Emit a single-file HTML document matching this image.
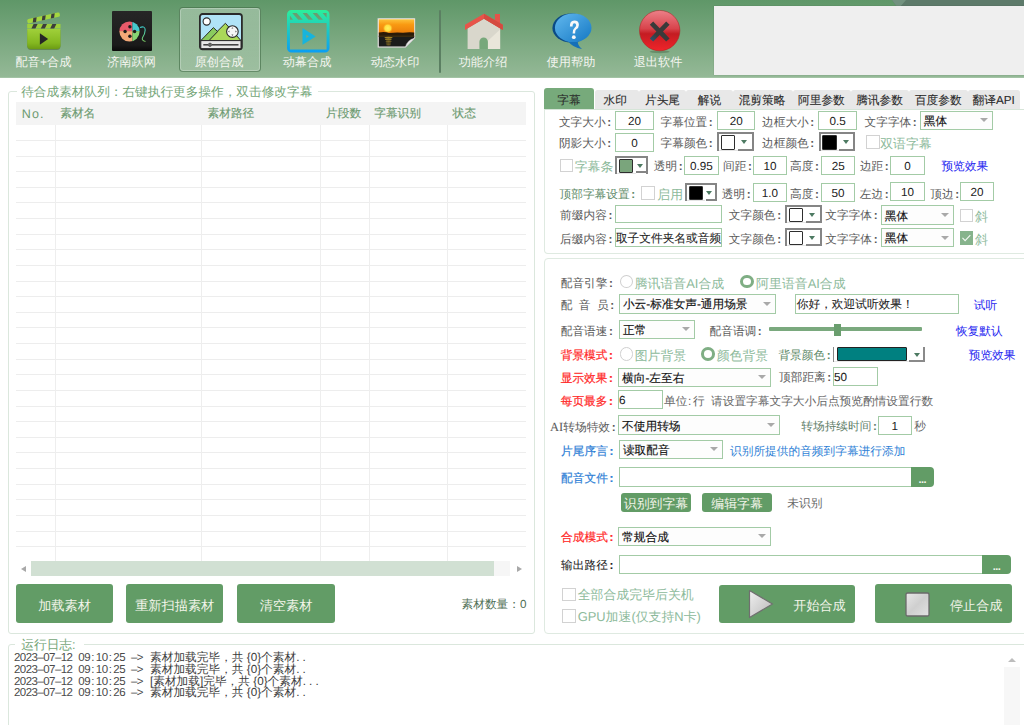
<!DOCTYPE html><html><head><meta charset="utf-8"><style>
html,body{margin:0;padding:0;}
body{width:1024px;height:725px;overflow:hidden;position:relative;background:#fff;font-family:'Liberation Sans',sans-serif;text-rendering:geometricPrecision;}
.a{position:absolute;}
.t{position:absolute;white-space:nowrap;line-height:20px;height:20px;}
.c{font-weight:bold;margin-left:1.6px;}
.lg{white-space:nowrap;line-height:16px;font-size:11.5px;color:#4a4a4a;}
.lg i{font-style:normal;display:inline-block;width:5.85px;text-align:center;}
</style></head><body>
<div class="a" style="left:0.0px;top:0.0px;width:1024.0px;height:78.0px;background:linear-gradient(#5f9768,#95b997)"></div>
<div class="a" style="left:0.0px;top:76.8px;width:1024.0px;height:1.2px;background:#a3c3a5"></div>
<svg class="a" style="left:880px;top:0" width="144" height="7"><polygon points="12,0 144,0 144,7 17,7" fill="#5d7a6a"/><polygon points="12,0 26,0 20,7 17,7" fill="#72927f"/></svg>
<div class="a" style="left:714.0px;top:6.0px;width:310.0px;height:68.5px;background:#efefef;box-shadow:0 0 1px rgba(0,0,0,0.25)"></div>
<div class="a" style="left:179.0px;top:6.6px;width:82.0px;height:65.4px;background:linear-gradient(rgba(255,255,255,0.32),rgba(255,255,255,0.12));border:1px solid rgba(60,105,65,0.65);border-radius:4px;box-sizing:border-box;box-shadow:inset 0 0 0 1px rgba(255,255,255,0.25)"></div>
<div class="a" style="left:439.0px;top:10.3px;width:1.6px;height:63.2px;background:#5b7f62;border-radius:1px"></div>
<div class="t" style="left:-0.5px;width:88px;text-align:center;top:51.9px;font-size:12.2px;color:#f4f5f0;">配音+合成</div>
<div class="t" style="left:87.5px;width:88px;text-align:center;top:51.9px;font-size:12.2px;color:#f4f5f0;">济南跃网</div>
<div class="t" style="left:175.0px;width:88px;text-align:center;top:51.9px;font-size:12.2px;color:#f4f5f0;">原创合成</div>
<div class="t" style="left:263.0px;width:88px;text-align:center;top:51.9px;font-size:12.2px;color:#f4f5f0;">动幕合成</div>
<div class="t" style="left:351.0px;width:88px;text-align:center;top:51.9px;font-size:12.2px;color:#f4f5f0;">动态水印</div>
<div class="t" style="left:439.0px;width:88px;text-align:center;top:51.9px;font-size:12.2px;color:#f4f5f0;">功能介绍</div>
<div class="t" style="left:527.0px;width:88px;text-align:center;top:51.9px;font-size:12.2px;color:#f4f5f0;">使用帮助</div>
<div class="t" style="left:614.0px;width:88px;text-align:center;top:51.9px;font-size:12.2px;color:#f4f5f0;">退出软件</div>
<svg class="a" style="left:26px;top:11px" width="37" height="40" viewBox="0 0 37 40">
<defs><linearGradient id="g1" x1="0" y1="0" x2="0" y2="1"><stop offset="0" stop-color="#a0d03a"/><stop offset="0.7" stop-color="#84b820"/><stop offset="1" stop-color="#6c9c14"/></linearGradient></defs>
<path d="M1.2 17.9 H34.5 V34.3 A3.7 3.7 0 0 1 30.8 38 H4.9 A3.7 3.7 0 0 1 1.2 34.3 Z" fill="#4a6a2a" opacity="0.55" transform="translate(0,0.9)"/>
<path d="M1.2 17.9 H34.5 V34.3 A3.7 3.7 0 0 1 30.8 38 H4.9 A3.7 3.7 0 0 1 1.2 34.3 Z" fill="url(#g1)"/>
<rect x="1.2" y="13" width="33.3" height="4.5" fill="#9dcf3c"/>
<path d="M7.6 13 H11.6 L9.4 17.5 H5.4 Z M17 13 H21 L18.8 17.5 H14.8 Z M26.4 13 H30.4 L28.2 17.5 H24.2 Z" fill="#3c3c3c"/>
<g transform="translate(0.9,8.4) rotate(-12.5)">
<rect x="0" y="0" width="33.2" height="4.4" rx="1.6" fill="#a4d640"/>
<path d="M6.6 0 H10 L8.4 4.4 H5 Z M15.9 0 H19.3 L17.7 4.4 H14.3 Z M25.1 0 H28.5 L26.9 4.4 H23.5 Z" fill="#3c3c3c"/>
</g>
<path d="M13.9 22.2 L22.1 28 L13.9 33.7 Z" fill="#262626"/>
</svg>
<svg class="a" style="left:112px;top:11px" width="40" height="40" viewBox="0 0 40 40">
<defs><linearGradient id="g2" x1="0" y1="0" x2="0" y2="1"><stop offset="0" stop-color="#262626"/><stop offset="0.85" stop-color="#1a1a1a"/><stop offset="1" stop-color="#0a0a0a"/></linearGradient>
<clipPath id="c2"><circle cx="17.5" cy="20.5" r="10.1"/></clipPath>
<linearGradient id="g2t" x1="0" y1="0" x2="0" y2="1"><stop offset="0" stop-color="#3cc8c8"/><stop offset="1" stop-color="#78c860"/></linearGradient></defs>
<rect x="0" y="0" width="40" height="40" rx="1" fill="url(#g2)"/>
<g clip-path="url(#c2)">
<rect x="7" y="10" width="13.4" height="10.1" fill="#e85a6a"/>
<rect x="20.4" y="10" width="10" height="10.1" fill="#45c8cc"/>
<rect x="7" y="20.1" width="13.4" height="11" fill="#f4a878"/>
<rect x="20.4" y="20.1" width="10" height="11" fill="#86d474"/>
</g>
<circle cx="17.9" cy="15.7" r="1.7" fill="#1c1c1c"/><circle cx="13.1" cy="20.5" r="1.7" fill="#1c1c1c"/><circle cx="22.6" cy="20.5" r="1.7" fill="#1c1c1c"/><circle cx="17.9" cy="25.2" r="1.7" fill="#1c1c1c"/>
<path d="M28 16.5 Q33 14.5 33.2 19 Q33 23 30.6 26.5 Q29.2 29.5 33.5 30.5" fill="none" stroke="url(#g2t)" stroke-width="1.1"/>
</svg>
<svg class="a" style="left:199px;top:12.5px" width="44" height="38" viewBox="0 0 44 38">
<rect x="0.9" y="1" width="42" height="35.3" rx="2.6" fill="#b0e3f7" stroke="#2a2a2a" stroke-width="1.8"/>
<path d="M9 27.6 L26.4 10.3 L42 27.6 Z" fill="#aad858" stroke="#2a2a2a" stroke-width="1"/>
<path d="M1.8 27.6 L14.4 14.6 L18.6 18.6 L10 27.6 Z" fill="#8acb5e" stroke="#2a2a2a" stroke-width="1" stroke-linejoin="round"/>
<circle cx="7.7" cy="8.5" r="3.6" fill="#fff" stroke="#2a2a2a" stroke-width="1.1"/>
<circle cx="33.4" cy="18.6" r="5.8" fill="#f6f6f6" stroke="#2a2a2a" stroke-width="1.1"/>
<path d="M33.4 14.2 l-1 1.4 h2z M33.4 23 l-1 -1.4 h2z M29 18.6 l1.4 -1 v2z M37.8 18.6 l-1.4 -1 v2z" fill="#555"/>
<rect x="1.8" y="27.6" width="40.2" height="8" fill="#e8e8e8" stroke="#2a2a2a" stroke-width="1"/>
<line x1="4.3" y1="31.8" x2="9" y2="31.8" stroke="#444" stroke-width="1.6"/>
<line x1="13" y1="31.8" x2="39.5" y2="31.8" stroke="#444" stroke-width="1.6"/>
<circle cx="11" cy="31.8" r="1.7" fill="#666" stroke="#333" stroke-width="0.6"/>
</svg>
<svg class="a" style="left:287px;top:10px" width="43" height="43" viewBox="0 0 43 43">
<defs><linearGradient id="g4" x1="0" y1="0" x2="0" y2="1"><stop offset="0" stop-color="#2cef9a"/><stop offset="1" stop-color="#0a9ef4"/></linearGradient></defs>
<path d="M4.5 0 H38 A4.5 4.5 0 0 1 42.5 4.5 V38 A4.5 4.5 0 0 1 38 42.5 H4.5 A4.5 4.5 0 0 1 0 38 V4.5 A4.5 4.5 0 0 1 4.5 0 Z
M2.9 13 V39.6 H39.6 V13 Z
M2.9 9.7 V5.5 L6 9.7 Z
M5.2 3.1 H9.7 L15.8 9.7 H11.2 Z
M15.6 3.1 H19.9 L26 9.7 H21.5 Z
M25.6 3.1 H30 L36 9.7 H31.8 Z
M35.6 3.1 H39.6 V7.8 Z" fill="url(#g4)" fill-rule="evenodd"/>
<path d="M15.5 18.1 L28.7 26.4 L15.5 34.7 Z M19.3 24.8 V28 L21.9 26.4 Z" fill="#17b4dc" fill-rule="evenodd"/>
</svg>
<svg class="a" style="left:377px;top:17.5px" width="40" height="31" viewBox="0 0 40 31">
<defs><linearGradient id="g5" x1="0" y1="0" x2="0" y2="1"><stop offset="0" stop-color="#fcc23a"/><stop offset="0.35" stop-color="#f99a12"/><stop offset="1" stop-color="#e8780a"/></linearGradient>
<radialGradient id="g5s"><stop offset="0" stop-color="#fff060"/><stop offset="0.6" stop-color="#ffe040"/><stop offset="1" stop-color="#ffb020" stop-opacity="0"/></radialGradient>
<linearGradient id="g5r" x1="0" y1="0" x2="0" y2="1"><stop offset="0" stop-color="#d0a020" stop-opacity="0.8"/><stop offset="1" stop-color="#a08010" stop-opacity="0.4"/></linearGradient></defs>
<path d="M0.8 0.3 H38 V20 L28.6 29.5 H0.8 Z" fill="#f4f4f0" stroke="#bbb" stroke-width="0.5"/>
<rect x="1.8" y="1.3" width="35.4" height="15" fill="url(#g5)"/>
<circle cx="10.8" cy="10.2" r="5" fill="url(#g5s)"/>
<path d="M1.8 14.5 Q8 13.5 12 15 Q20 14 26 14.8 Q32 14 37.2 14.6 V18.5 H1.8 Z" fill="#2a1a08"/>
<path d="M1.8 18.2 H37.2 V19.8 L28.3 28.5 H1.8 Z" fill="#1b1b1b"/>
<rect x="1.8" y="17.5" width="35.4" height="1.5" fill="#3a2a10"/>
<g fill="#d0a428"><ellipse cx="11.5" cy="19.6" rx="4" ry="0.9" opacity="0.75"/><ellipse cx="11.3" cy="21.4" rx="3.4" ry="0.8" opacity="0.65"/><ellipse cx="11.6" cy="23.2" rx="3.2" ry="0.8" opacity="0.55"/><ellipse cx="11.4" cy="25" rx="2.8" ry="0.8" opacity="0.5"/><ellipse cx="11.5" cy="26.8" rx="2.4" ry="0.7" opacity="0.45"/></g>
<path d="M28.3 29.5 Q29.5 22 38 20 Z" fill="#e6e6e6" stroke="#aaa" stroke-width="0.4"/>
</svg>
<svg class="a" style="left:464px;top:13px" width="40" height="37" viewBox="0 0 40 37">
<rect x="30.9" y="1" width="5.1" height="12" fill="#e4544a"/>
<path d="M3.6 15 L20 5.8 L36.1 15 V35.9 H3.6 Z" fill="#d9d7cc"/>
<path d="M15 35.9 L36.1 16.4 V35.9 Z" fill="#e9e6da"/>
<path d="M15.4 35.9 V28.7 A4.25 4.25 0 0 1 23.9 28.7 V35.9 Z" fill="#77a87b"/>
<path d="M1 11.8 L20 0.7 L38.8 11.8 V16.9 L20 5.8 L1 16.9 Z" fill="#e8544a"/>
<path d="M20 0.7 L38.8 11.8 V16.9 L20 5.8 Z" fill="#d54a40"/>
</svg>
<svg class="a" style="left:552px;top:13px" width="41" height="37" viewBox="0 0 41 37">
<defs><linearGradient id="g7" x1="0" y1="0" x2="1" y2="1"><stop offset="0" stop-color="#62b8ee"/><stop offset="1" stop-color="#1478c4"/></linearGradient></defs>
<ellipse cx="19.2" cy="15" rx="18.8" ry="14.6" fill="#0a4a86"/>
<path d="M15 27 Q21 35 30 36 Q25 32 26 27.5 Z" fill="#1570b8"/>
<ellipse cx="21.2" cy="14.8" rx="18.3" ry="14.3" fill="url(#g7)"/>
<g transform="translate(0.3,1.6)"><path d="M17.6 12 Q17.4 6 22 6 Q26.6 6 26.6 10.3 Q26.6 13 23.8 15 Q22.8 15.8 22.8 18.8 H20.3 Q20.1 14.8 22.2 13.3 Q23.9 12 23.9 10.6 Q23.9 8.7 22 8.7 Q20.3 8.7 20.3 12 Z" fill="#f8f8f8"/>
<circle cx="21.5" cy="22.6" r="1.9" fill="#f8f8f8"/></g>
</svg>
<svg class="a" style="left:638px;top:10px" width="44" height="44" viewBox="0 0 44 44">
<defs><linearGradient id="g8" x1="0" y1="0" x2="0" y2="1"><stop offset="0" stop-color="#ec8088"/><stop offset="0.45" stop-color="#d8444c"/><stop offset="0.58" stop-color="#c41c22"/><stop offset="1" stop-color="#f0242a"/></linearGradient>
<linearGradient id="g8x" x1="0" y1="1" x2="1" y2="0"><stop offset="0" stop-color="#245a7a"/><stop offset="0.35" stop-color="#3a3a3a"/><stop offset="1" stop-color="#3a3a3a"/></linearGradient></defs>
<ellipse cx="21.7" cy="41.8" rx="10" ry="1.5" fill="rgba(40,70,40,0.3)"/>
<circle cx="21.7" cy="20.6" r="20.2" fill="url(#g8)" stroke="#a82020" stroke-width="0.5"/>
<path d="M11.8 14.8 L15.2 11.6 L21.7 18.3 L28.2 11.6 L31.6 14.8 L25 21.6 L31.6 28.4 L28.2 31.6 L21.7 25 L15.2 31.6 L11.8 28.4 L18.4 21.6 Z" fill="url(#g8x)"/>
</svg>
<div class="a" style="left:8.0px;top:90.5px;width:527.0px;height:543.5px;border:1px solid #dbe7dd;border-radius:3px;box-sizing:border-box"></div>
<div class="a" style="left:17.0px;top:85.0px;width:301.0px;height:11.0px;background:#fff"></div>
<div class="t" style="left:21.2px;top:82.0px;font-size:12.67px;color:#74a577;">待合成素材队列：右键执行更多操作，双击修改字幕</div>
<div class="a" style="left:16.0px;top:102.0px;width:510.4px;height:23.0px;background:#f4f4f4"></div>
<div class="t" style="left:21.7px;top:103.8px;font-size:12.5px;color:#6c9a70;letter-spacing:1.2px">No.</div>
<div class="t" style="left:60.2px;top:104.0px;font-size:11.7px;color:#6c9a70;-webkit-text-stroke:0.15px #6c9a70">素材名</div>
<div class="t" style="left:207.5px;top:104.0px;font-size:11.7px;color:#6c9a70;-webkit-text-stroke:0.15px #6c9a70">素材路径</div>
<div class="t" style="left:326.1px;top:104.0px;font-size:11.7px;color:#6c9a70;-webkit-text-stroke:0.15px #6c9a70">片段数</div>
<div class="t" style="left:374.2px;top:104.0px;font-size:11.7px;color:#6c9a70;-webkit-text-stroke:0.15px #6c9a70">字幕识别</div>
<div class="t" style="left:452.6px;top:104.0px;font-size:11.7px;color:#6c9a70;-webkit-text-stroke:0.15px #6c9a70">状态</div>
<div class="a" style="left:16.0px;top:139.9px;width:510.4px;height:1.0px;background:#ededed"></div>
<div class="a" style="left:16.0px;top:155.5px;width:510.4px;height:1.0px;background:#ededed"></div>
<div class="a" style="left:16.0px;top:171.2px;width:510.4px;height:1.0px;background:#ededed"></div>
<div class="a" style="left:16.0px;top:186.8px;width:510.4px;height:1.0px;background:#ededed"></div>
<div class="a" style="left:16.0px;top:202.4px;width:510.4px;height:1.0px;background:#ededed"></div>
<div class="a" style="left:16.0px;top:218.0px;width:510.4px;height:1.0px;background:#ededed"></div>
<div class="a" style="left:16.0px;top:233.7px;width:510.4px;height:1.0px;background:#ededed"></div>
<div class="a" style="left:16.0px;top:249.3px;width:510.4px;height:1.0px;background:#ededed"></div>
<div class="a" style="left:16.0px;top:264.9px;width:510.4px;height:1.0px;background:#ededed"></div>
<div class="a" style="left:16.0px;top:280.5px;width:510.4px;height:1.0px;background:#ededed"></div>
<div class="a" style="left:16.0px;top:296.2px;width:510.4px;height:1.0px;background:#ededed"></div>
<div class="a" style="left:16.0px;top:311.8px;width:510.4px;height:1.0px;background:#ededed"></div>
<div class="a" style="left:16.0px;top:327.4px;width:510.4px;height:1.0px;background:#ededed"></div>
<div class="a" style="left:16.0px;top:343.1px;width:510.4px;height:1.0px;background:#ededed"></div>
<div class="a" style="left:16.0px;top:358.7px;width:510.4px;height:1.0px;background:#ededed"></div>
<div class="a" style="left:16.0px;top:374.3px;width:510.4px;height:1.0px;background:#ededed"></div>
<div class="a" style="left:16.0px;top:389.9px;width:510.4px;height:1.0px;background:#ededed"></div>
<div class="a" style="left:16.0px;top:405.6px;width:510.4px;height:1.0px;background:#ededed"></div>
<div class="a" style="left:16.0px;top:421.2px;width:510.4px;height:1.0px;background:#ededed"></div>
<div class="a" style="left:16.0px;top:436.8px;width:510.4px;height:1.0px;background:#ededed"></div>
<div class="a" style="left:16.0px;top:452.4px;width:510.4px;height:1.0px;background:#ededed"></div>
<div class="a" style="left:16.0px;top:468.1px;width:510.4px;height:1.0px;background:#ededed"></div>
<div class="a" style="left:16.0px;top:483.7px;width:510.4px;height:1.0px;background:#ededed"></div>
<div class="a" style="left:16.0px;top:499.3px;width:510.4px;height:1.0px;background:#ededed"></div>
<div class="a" style="left:16.0px;top:514.9px;width:510.4px;height:1.0px;background:#ededed"></div>
<div class="a" style="left:16.0px;top:530.6px;width:510.4px;height:1.0px;background:#ededed"></div>
<div class="a" style="left:16.0px;top:546.2px;width:510.4px;height:1.0px;background:#ededed"></div>
<div class="a" style="left:54.7px;top:125.0px;width:1.0px;height:436.0px;background:#eeeeee"></div>
<div class="a" style="left:200.8px;top:125.0px;width:1.0px;height:436.0px;background:#eeeeee"></div>
<div class="a" style="left:319.8px;top:125.0px;width:1.0px;height:436.0px;background:#eeeeee"></div>
<div class="a" style="left:369.0px;top:125.0px;width:1.0px;height:436.0px;background:#eeeeee"></div>
<div class="a" style="left:447.1px;top:125.0px;width:1.0px;height:436.0px;background:#eeeeee"></div>
<div class="a" style="left:31.0px;top:561.0px;width:479.4px;height:15.0px;background:#f6f6f6"></div>
<div class="a" style="left:31.2px;top:561.0px;width:462.8px;height:15.0px;background:#d1e0d3"></div>
<div class="a" style="left:21px;top:565.5px;width:0;height:0;border-top:3.5px solid transparent;border-bottom:3.5px solid transparent;border-right:5px solid #a8a8a8"></div>
<div class="a" style="left:516.5px;top:565.5px;width:0;height:0;border-top:3.5px solid transparent;border-bottom:3.5px solid transparent;border-left:5px solid #a8a8a8"></div>
<div class="a" style="left:15.9px;top:584.1px;width:97.1px;height:39.4px;background:#629c66;border-radius:3px"></div>
<div class="t" style="left:16.0px;width:97px;text-align:center;top:595.9px;font-size:13.2px;color:#f3f5ea;">加载素材</div>
<div class="a" style="left:125.9px;top:584.1px;width:97.5px;height:39.4px;background:#629c66;border-radius:3px"></div>
<div class="t" style="left:126.2px;width:97px;text-align:center;top:595.9px;font-size:13.2px;color:#f3f5ea;">重新扫描素材</div>
<div class="a" style="left:237.1px;top:584.1px;width:97.8px;height:39.4px;background:#629c66;border-radius:3px"></div>
<div class="t" style="left:237.5px;width:97px;text-align:center;top:595.9px;font-size:13.2px;color:#f3f5ea;">清空素材</div>
<div class="t" style="left:226.5px;width:300px;text-align:right;top:594.8px;font-size:11.7px;color:#4f6f55;">素材数量：0</div>
<div class="a" style="left:7.8px;top:644.2px;width:1092.2px;height:155.8px;border:1px solid #dbe7dd;border-radius:3px;box-sizing:border-box"></div>
<div class="a" style="left:15.0px;top:638.0px;width:69.0px;height:12.0px;background:#fff"></div>
<div class="t" style="left:21.3px;top:635.3px;font-size:12.7px;color:#74a577;">运行日志:</div>
<div class="a lg" style="left:14px;top:650px"><i>2</i><i>0</i><i>2</i><i>3</i><i>–</i><i>0</i><i>7</i><i>–</i><i>1</i><i>2</i><i>&nbsp;</i><i>0</i><i>9</i><i>:</i><i>1</i><i>0</i><i>:</i><i>2</i><i>5</i><i>&nbsp;</i><i>–</i><i>></i><i>&nbsp;</i></div>
<div class="a" style="left:150px;top:650px;white-space:pre;line-height:16px;font-size:11.7px;color:#3c3c3c">素材加载完毕，共 {0}个素材<span style="letter-spacing:3.2px">..</span></div>
<div class="a lg" style="left:14px;top:662px"><i>2</i><i>0</i><i>2</i><i>3</i><i>–</i><i>0</i><i>7</i><i>–</i><i>1</i><i>2</i><i>&nbsp;</i><i>0</i><i>9</i><i>:</i><i>1</i><i>0</i><i>:</i><i>2</i><i>5</i><i>&nbsp;</i><i>–</i><i>></i><i>&nbsp;</i></div>
<div class="a" style="left:150px;top:662px;white-space:pre;line-height:16px;font-size:11.7px;color:#3c3c3c">素材加载完毕，共 {0}个素材<span style="letter-spacing:3.2px">..</span></div>
<div class="a lg" style="left:14px;top:674px"><i>2</i><i>0</i><i>2</i><i>3</i><i>–</i><i>0</i><i>7</i><i>–</i><i>1</i><i>2</i><i>&nbsp;</i><i>0</i><i>9</i><i>:</i><i>1</i><i>0</i><i>:</i><i>2</i><i>5</i><i>&nbsp;</i><i>–</i><i>></i><i>&nbsp;</i></div>
<div class="a" style="left:150px;top:674px;white-space:pre;line-height:16px;font-size:11.7px;color:#3c3c3c">[素材加载]完毕，共 {0}个素材<span style="letter-spacing:3.2px">...</span></div>
<div class="a lg" style="left:14px;top:685px"><i>2</i><i>0</i><i>2</i><i>3</i><i>–</i><i>0</i><i>7</i><i>–</i><i>1</i><i>2</i><i>&nbsp;</i><i>0</i><i>9</i><i>:</i><i>1</i><i>0</i><i>:</i><i>2</i><i>6</i><i>&nbsp;</i><i>–</i><i>></i><i>&nbsp;</i></div>
<div class="a" style="left:150px;top:685px;white-space:pre;line-height:16px;font-size:11.7px;color:#3c3c3c">素材加载完毕，共 {0}个素材<span style="letter-spacing:3.2px">..</span></div>
<div class="a" style="left:1008px;top:657.5px;width:0;height:0;border-left:4px solid transparent;border-right:4px solid transparent;border-bottom:4px solid #bdbdbd"></div>
<div class="a" style="left:1004.0px;top:667.4px;width:15.7px;height:57.6px;background:#f7f7f7"></div>
<div class="a" style="left:544.0px;top:109.0px;width:556.0px;height:145.0px;border:1px solid #dfeae1;border-top:1px solid #d6e5d8;border-radius:0 0 0 4px;box-sizing:border-box"></div>
<div class="a" style="left:594.5px;top:89.9px;width:44.5px;height:19.4px;background:#e8e8e8;border-radius:2.5px 2.5px 0 0"></div>
<div class="a" style="left:639.0px;top:89.9px;width:47.2px;height:19.4px;background:#e8e8e8;border-radius:2.5px 2.5px 0 0"></div>
<div class="a" style="left:686.2px;top:89.9px;width:47.2px;height:19.4px;background:#e8e8e8;border-radius:2.5px 2.5px 0 0"></div>
<div class="a" style="left:733.4px;top:89.9px;width:59.6px;height:19.4px;background:#e8e8e8;border-radius:2.5px 2.5px 0 0"></div>
<div class="a" style="left:793.0px;top:89.9px;width:58.0px;height:19.4px;background:#e8e8e8;border-radius:2.5px 2.5px 0 0"></div>
<div class="a" style="left:851.0px;top:89.9px;width:58.0px;height:19.4px;background:#e8e8e8;border-radius:2.5px 2.5px 0 0"></div>
<div class="a" style="left:909.0px;top:89.9px;width:58.8px;height:19.4px;background:#e8e8e8;border-radius:2.5px 2.5px 0 0"></div>
<div class="a" style="left:967.8px;top:89.9px;width:52.2px;height:19.4px;background:#e8e8e8;border-radius:2.5px 2.5px 0 0"></div>
<div class="a" style="left:544.1px;top:88.2px;width:50.4px;height:21.3px;background:#77aa7b;border-radius:3px 3px 0 0"></div>
<div class="t" style="left:534.0px;width:70px;text-align:center;top:90.8px;font-size:11.7px;color:#2a2a2a;-webkit-text-stroke:0.1px #2a2a2a">字幕</div>
<div class="t" style="left:580.3px;width:70px;text-align:center;top:90.8px;font-size:11.7px;color:#2a2a2a;-webkit-text-stroke:0.1px #2a2a2a">水印</div>
<div class="t" style="left:627.5px;width:70px;text-align:center;top:90.8px;font-size:11.7px;color:#2a2a2a;-webkit-text-stroke:0.1px #2a2a2a">片头尾</div>
<div class="t" style="left:674.5px;width:70px;text-align:center;top:90.8px;font-size:11.7px;color:#2a2a2a;-webkit-text-stroke:0.1px #2a2a2a">解说</div>
<div class="t" style="left:727.0px;width:70px;text-align:center;top:90.8px;font-size:11.7px;color:#2a2a2a;-webkit-text-stroke:0.1px #2a2a2a">混剪策略</div>
<div class="t" style="left:786.4px;width:70px;text-align:center;top:90.8px;font-size:11.7px;color:#2a2a2a;-webkit-text-stroke:0.1px #2a2a2a">阿里参数</div>
<div class="t" style="left:844.5px;width:70px;text-align:center;top:90.8px;font-size:11.7px;color:#2a2a2a;-webkit-text-stroke:0.1px #2a2a2a">腾讯参数</div>
<div class="t" style="left:903.3px;width:70px;text-align:center;top:90.8px;font-size:11.7px;color:#2a2a2a;-webkit-text-stroke:0.1px #2a2a2a">百度参数</div>
<div class="t" style="left:958.7px;width:70px;text-align:center;top:90.8px;font-size:11.7px;color:#2a2a2a;-webkit-text-stroke:0.1px #2a2a2a">翻译API</div>
<div class="t" style="left:558.9px;top:112.5px;font-size:11.7px;color:#5a5a5a;">文字大小<b class="c">:</b></div>
<div class="a" style="left:615.2px;top:111.1px;width:38.8px;height:18.8px;border:1px solid #a3cba6;background:#fff;box-sizing:border-box"></div>
<div class="t" style="left:615.2px;width:38.799999999999955px;text-align:center;top:112.0px;font-size:11.7px;color:#222;">20</div>
<div class="t" style="left:660.5px;top:112.5px;font-size:11.7px;color:#5a5a5a;">字幕位置<b class="c">:</b></div>
<div class="a" style="left:716.8px;top:111.1px;width:38.7px;height:18.8px;border:1px solid #a3cba6;background:#fff;box-sizing:border-box"></div>
<div class="t" style="left:716.8px;width:38.700000000000045px;text-align:center;top:112.0px;font-size:11.7px;color:#222;">20</div>
<div class="t" style="left:762.0px;top:112.5px;font-size:11.7px;color:#5a5a5a;">边框大小<b class="c">:</b></div>
<div class="a" style="left:818.3px;top:111.1px;width:38.6px;height:18.8px;border:1px solid #a3cba6;background:#fff;box-sizing:border-box"></div>
<div class="t" style="left:818.3px;width:38.60000000000002px;text-align:center;top:112.0px;font-size:11.7px;color:#222;">0.5</div>
<div class="t" style="left:864.5px;top:112.5px;font-size:11.7px;color:#5a5a5a;">文字字体<b class="c">:</b></div>
<div class="a" style="left:919.8px;top:111.1px;width:73.2px;height:18.7px;border:1px solid #a3cba6;background:#fdfdfd;box-sizing:border-box"></div>
<div class="t" style="left:923.7px;top:112.0px;font-size:11.7px;color:#111;-webkit-text-stroke:0.14px #111">黑体</div>
<div class="a" style="left:980.0px;top:118.2px;width:0;height:0;border-left:4px solid transparent;border-right:4px solid transparent;border-top:4px solid #a9a9a9"></div>
<div class="t" style="left:558.9px;top:133.5px;font-size:11.7px;color:#5a5a5a;">阴影大小<b class="c">:</b></div>
<div class="a" style="left:615.2px;top:132.5px;width:38.8px;height:19.0px;border:1px solid #a3cba6;background:#fff;box-sizing:border-box"></div>
<div class="t" style="left:615.2px;width:38.799999999999955px;text-align:center;top:133.5px;font-size:11.7px;color:#222;">0</div>
<div class="t" style="left:660.5px;top:133.5px;font-size:11.7px;color:#5a5a5a;">字幕颜色<b class="c">:</b></div>
<div class="a" style="left:717.0px;top:132.2px;width:36.7px;height:18.4px;background:#fff;border-top:2px solid #858585;border-left:2px solid #858585;border-right:2px solid #858585;box-sizing:border-box"></div>
<div class="a" style="left:720.7px;top:134.9px;width:14.4px;height:14.8px;background:#fff;border:1.2px solid #2e2e2e;border-radius:1px;box-sizing:border-box"></div>
<div class="a" style="left:719.0px;top:149.6px;width:18.7px;height:1.0px;background:#e4e4e4"></div>
<div class="a" style="left:737.7px;top:148.5px;width:16.0px;height:2.1px;background:#858585"></div>
<div class="a" style="left:741.0px;top:140.2px;width:0;height:0;border-left:3.5px solid transparent;border-right:3.5px solid transparent;border-top:4.2px solid #4d7a62"></div>
<div class="t" style="left:762.0px;top:133.5px;font-size:11.7px;color:#5a5a5a;">边框颜色<b class="c">:</b></div>
<div class="a" style="left:818.6px;top:132.2px;width:36.9px;height:18.4px;background:#fff;border-top:2px solid #858585;border-left:2px solid #858585;border-right:2px solid #858585;box-sizing:border-box"></div>
<div class="a" style="left:822.3px;top:134.9px;width:14.4px;height:14.8px;background:#000;border:1.2px solid #2e2e2e;border-radius:1px;box-sizing:border-box"></div>
<div class="a" style="left:820.6px;top:149.6px;width:18.7px;height:1.0px;background:#e4e4e4"></div>
<div class="a" style="left:839.3px;top:148.5px;width:16.2px;height:2.1px;background:#858585"></div>
<div class="a" style="left:842.7px;top:140.2px;width:0;height:0;border-left:3.5px solid transparent;border-right:3.5px solid transparent;border-top:4.2px solid #4d7a62"></div>
<div class="a" style="left:866.0px;top:135.4px;width:13.7px;height:13.2px;border:1.3px solid #d2d2d2;background:#fff;box-sizing:border-box"></div>
<div class="t" style="left:880.2px;top:133.5px;font-size:12.9px;color:#8dba9b;">双语字幕</div>
<div class="a" style="left:559.6px;top:158.9px;width:13.1px;height:13.1px;border:1.3px solid #d2d2d2;background:#fff;box-sizing:border-box"></div>
<div class="t" style="left:574.7px;top:157.0px;font-size:12.9px;color:#8dba9b;">字幕条</div>
<div class="a" style="left:615.2px;top:156.0px;width:32.6px;height:17.5px;background:#fff;border-top:2px solid #858585;border-left:2px solid #858585;border-right:2px solid #858585;box-sizing:border-box"></div>
<div class="a" style="left:618.9px;top:158.7px;width:14.4px;height:13.9px;background:#7aa57c;border:1.2px solid #2e2e2e;border-radius:1px;box-sizing:border-box"></div>
<div class="a" style="left:617.2px;top:172.5px;width:18.7px;height:1.0px;background:#e4e4e4"></div>
<div class="a" style="left:635.9px;top:171.4px;width:11.9px;height:2.1px;background:#858585"></div>
<div class="a" style="left:637.1px;top:163.6px;width:0;height:0;border-left:3.5px solid transparent;border-right:3.5px solid transparent;border-top:4.2px solid #4d7a62"></div>
<div class="t" style="left:653.8px;top:157.0px;font-size:11.7px;color:#5a5a5a;">透明<b class="c">:</b></div>
<div class="a" style="left:684.3px;top:156.0px;width:34.3px;height:18.8px;border:1px solid #a3cba6;background:#fff;box-sizing:border-box"></div>
<div class="t" style="left:684.3px;width:34.30000000000007px;text-align:center;top:156.9px;font-size:11.7px;color:#222;">0.95</div>
<div class="t" style="left:723.0px;top:157.0px;font-size:11.7px;color:#5a5a5a;">间距<b class="c">:</b></div>
<div class="a" style="left:753.2px;top:156.0px;width:33.5px;height:18.8px;border:1px solid #a3cba6;background:#fff;box-sizing:border-box"></div>
<div class="t" style="left:753.2px;width:33.5px;text-align:center;top:156.9px;font-size:11.7px;color:#222;">10</div>
<div class="t" style="left:790.1px;top:157.0px;font-size:11.7px;color:#5a5a5a;">高度<b class="c">:</b></div>
<div class="a" style="left:821.3px;top:156.0px;width:33.9px;height:18.8px;border:1px solid #a3cba6;background:#fff;box-sizing:border-box"></div>
<div class="t" style="left:821.3px;width:33.90000000000009px;text-align:center;top:156.9px;font-size:11.7px;color:#222;">25</div>
<div class="t" style="left:859.9px;top:157.0px;font-size:11.7px;color:#5a5a5a;">边距<b class="c">:</b></div>
<div class="a" style="left:890.4px;top:156.0px;width:34.2px;height:18.8px;border:1px solid #a3cba6;background:#fff;box-sizing:border-box"></div>
<div class="t" style="left:890.4px;width:34.200000000000045px;text-align:center;top:156.9px;font-size:11.7px;color:#222;">0</div>
<div class="t" style="left:941.4px;top:157.0px;font-size:11.7px;color:#2424f0;">预览效果</div>
<div class="t" style="left:559.5px;top:184.5px;font-size:11.7px;color:#5e8a68;">顶部字幕设置<b class="c">:</b></div>
<div class="a" style="left:641.3px;top:186.0px;width:13.5px;height:13.6px;border:1.3px solid #d2d2d2;background:#fff;box-sizing:border-box"></div>
<div class="t" style="left:657.3px;top:184.5px;font-size:12.9px;color:#8dba9b;">启用</div>
<div class="a" style="left:684.8px;top:183.2px;width:32.0px;height:17.8px;background:#fff;border-top:2px solid #858585;border-left:2px solid #858585;border-right:2px solid #858585;box-sizing:border-box"></div>
<div class="a" style="left:688.5px;top:185.9px;width:14.4px;height:14.2px;background:#000;border:1.2px solid #2e2e2e;border-radius:1px;box-sizing:border-box"></div>
<div class="a" style="left:686.8px;top:200.0px;width:18.7px;height:1.0px;background:#e4e4e4"></div>
<div class="a" style="left:705.5px;top:198.9px;width:11.3px;height:2.1px;background:#858585"></div>
<div class="a" style="left:706.4px;top:190.9px;width:0;height:0;border-left:3.5px solid transparent;border-right:3.5px solid transparent;border-top:4.2px solid #4d7a62"></div>
<div class="t" style="left:721.7px;top:184.5px;font-size:11.7px;color:#5a5a5a;">透明<b class="c">:</b></div>
<div class="a" style="left:753.0px;top:183.2px;width:33.7px;height:19.3px;border:1px solid #a3cba6;background:#fff;box-sizing:border-box"></div>
<div class="t" style="left:753.0px;width:33.700000000000045px;text-align:center;top:184.3px;font-size:11.7px;color:#222;">1.0</div>
<div class="t" style="left:790.1px;top:184.5px;font-size:11.7px;color:#5a5a5a;">高度<b class="c">:</b></div>
<div class="a" style="left:821.0px;top:183.2px;width:34.0px;height:19.3px;border:1px solid #a3cba6;background:#fff;box-sizing:border-box"></div>
<div class="t" style="left:821.0px;width:34px;text-align:center;top:184.3px;font-size:11.7px;color:#222;">50</div>
<div class="t" style="left:859.7px;top:184.5px;font-size:11.7px;color:#5a5a5a;">左边<b class="c">:</b></div>
<div class="a" style="left:890.4px;top:182.2px;width:34.2px;height:18.8px;border:1px solid #a3cba6;background:#fff;box-sizing:border-box"></div>
<div class="t" style="left:890.4px;width:34.200000000000045px;text-align:center;top:183.1px;font-size:11.7px;color:#222;">10</div>
<div class="t" style="left:930.2px;top:184.5px;font-size:11.7px;color:#5a5a5a;">顶边<b class="c">:</b></div>
<div class="a" style="left:960.2px;top:182.2px;width:33.6px;height:18.8px;border:1px solid #a3cba6;background:#fff;box-sizing:border-box"></div>
<div class="t" style="left:960.2px;width:33.59999999999991px;text-align:center;top:183.1px;font-size:11.7px;color:#222;">20</div>
<div class="t" style="left:560.1px;top:205.7px;font-size:11.7px;color:#5a5a5a;">前缀内容<b class="c">:</b></div>
<div class="a" style="left:615.2px;top:204.7px;width:106.9px;height:18.7px;border:1px solid #a3cba6;background:#fff;box-sizing:border-box"></div>
<div class="t" style="left:728.8px;top:205.7px;font-size:11.7px;color:#5a5a5a;">文字颜色<b class="c">:</b></div>
<div class="a" style="left:785.2px;top:205.2px;width:36.5px;height:17.8px;background:#fff;border-top:2px solid #858585;border-left:2px solid #858585;border-right:2px solid #858585;box-sizing:border-box"></div>
<div class="a" style="left:788.9px;top:207.9px;width:14.4px;height:14.2px;background:#fff;border:1.2px solid #2e2e2e;border-radius:1px;box-sizing:border-box"></div>
<div class="a" style="left:787.2px;top:222.0px;width:18.7px;height:1.0px;background:#e4e4e4"></div>
<div class="a" style="left:805.9px;top:220.9px;width:15.8px;height:2.1px;background:#858585"></div>
<div class="a" style="left:809.1px;top:212.9px;width:0;height:0;border-left:3.5px solid transparent;border-right:3.5px solid transparent;border-top:4.2px solid #4d7a62"></div>
<div class="t" style="left:825.3px;top:205.7px;font-size:11.7px;color:#5a5a5a;">文字字体<b class="c">:</b></div>
<div class="a" style="left:880.8px;top:205.4px;width:73.0px;height:19.3px;border:1px solid #a3cba6;background:#fdfdfd;box-sizing:border-box"></div>
<div class="t" style="left:884.7px;top:206.6px;font-size:11.7px;color:#111;-webkit-text-stroke:0.14px #111">黑体</div>
<div class="a" style="left:940.8px;top:212.9px;width:0;height:0;border-left:4px solid transparent;border-right:4px solid transparent;border-top:4px solid #a9a9a9"></div>
<div class="a" style="left:960.2px;top:208.7px;width:12.8px;height:13.1px;border:1.3px solid #d2d2d2;background:#fff;box-sizing:border-box"></div>
<div class="t" style="left:975.1px;top:206.5px;font-size:12.9px;color:#8dba9b;">斜</div>
<div class="t" style="left:560.1px;top:229.5px;font-size:11.7px;color:#5a5a5a;">后缀内容<b class="c">:</b></div>
<div class="a" style="left:615.2px;top:228.3px;width:106.9px;height:19.0px;border:1px solid #a3cba6;background:#fff;box-sizing:border-box"></div>
<div class="t" style="left:615.9px;top:229.3px;font-size:11.7px;color:#222;-webkit-text-stroke:0.08px #222">取子文件夹名或音频</div>
<div class="t" style="left:728.8px;top:229.5px;font-size:11.7px;color:#5a5a5a;">文字颜色<b class="c">:</b></div>
<div class="a" style="left:785.2px;top:228.3px;width:36.5px;height:17.8px;background:#fff;border-top:2px solid #858585;border-left:2px solid #858585;border-right:2px solid #858585;box-sizing:border-box"></div>
<div class="a" style="left:788.9px;top:231.0px;width:14.4px;height:14.2px;background:#fff;border:1.2px solid #2e2e2e;border-radius:1px;box-sizing:border-box"></div>
<div class="a" style="left:787.2px;top:245.1px;width:18.7px;height:1.0px;background:#e4e4e4"></div>
<div class="a" style="left:805.9px;top:244.0px;width:15.8px;height:2.1px;background:#858585"></div>
<div class="a" style="left:809.1px;top:236.0px;width:0;height:0;border-left:3.5px solid transparent;border-right:3.5px solid transparent;border-top:4.2px solid #4d7a62"></div>
<div class="t" style="left:825.3px;top:229.5px;font-size:11.7px;color:#5a5a5a;">文字字体<b class="c">:</b></div>
<div class="a" style="left:880.8px;top:228.4px;width:73.0px;height:19.0px;border:1px solid #a3cba6;background:#fdfdfd;box-sizing:border-box"></div>
<div class="t" style="left:884.7px;top:229.4px;font-size:11.7px;color:#111;-webkit-text-stroke:0.14px #111">黑体</div>
<div class="a" style="left:940.8px;top:235.7px;width:0;height:0;border-left:4px solid transparent;border-right:4px solid transparent;border-top:4px solid #a9a9a9"></div>
<div class="a" style="left:960.2px;top:231.0px;width:12.8px;height:13.7px;background:#86b38c"></div>
<svg class="a" style="left:960.2px;top:231px" width="12.799999999999955" height="13.699999999999989" viewBox="0 0 13 13"><path d="M2.5 6.5 L5.2 9.3 L10.5 3.8" fill="none" stroke="#f4f8f4" stroke-width="1.1"/></svg>
<div class="t" style="left:975.1px;top:230.0px;font-size:12.9px;color:#8dba9b;">斜</div>
<div class="a" style="left:544.0px;top:258.0px;width:556.0px;height:376.0px;border:1px solid #dfeae1;border-radius:4px;box-sizing:border-box"></div>
<div class="t" style="left:560.7px;top:273.5px;font-size:11.7px;color:#5a5a5a;">配音引擎<b class="c">:</b></div>
<div class="a" style="left:620.0px;top:275.0px;width:13.3px;height:13.4px;border:1.3px solid #cfcfcf;border-radius:50%;background:#fff;box-sizing:border-box"></div>
<div class="t" style="left:634.7px;top:273.5px;font-size:12.9px;color:#8dba9b;">腾讯语音AI合成</div>
<div class="a" style="left:740.3px;top:275.0px;width:13.5px;height:13.4px;border:3.5px solid #7fae84;border-radius:50%;background:#fff;box-sizing:border-box"></div>
<div class="t" style="left:756.1px;top:273.5px;font-size:12.9px;color:#8dba9b;">阿里语音AI合成</div>
<div class="t" style="left:560.7px;top:295.7px;font-size:11.7px;color:#5a5a5a;">配&nbsp;&nbsp;音&nbsp;&nbsp;员<b class="c">:</b></div>
<div class="a" style="left:619.0px;top:294.0px;width:156.8px;height:19.6px;border:1px solid #a3cba6;background:#fdfdfd;box-sizing:border-box"></div>
<div class="t" style="left:622.9px;top:295.3px;font-size:11.7px;color:#111;-webkit-text-stroke:0.14px #111">小云-标准女声-通用场景</div>
<div class="a" style="left:762.8px;top:301.6px;width:0;height:0;border-left:4px solid transparent;border-right:4px solid transparent;border-top:4px solid #a9a9a9"></div>
<div class="a" style="left:794.9px;top:294.0px;width:163.7px;height:19.6px;border:1px solid #a3cba6;background:#fff;box-sizing:border-box"></div>
<div class="t" style="left:796.8px;top:295.3px;font-size:11.7px;color:#222;-webkit-text-stroke:0.08px #222">你好，欢迎试听效果！</div>
<div class="t" style="left:973.8px;top:295.5px;font-size:11.7px;color:#2424f0;">试听</div>
<div class="t" style="left:560.7px;top:321.5px;font-size:11.7px;color:#5a5a5a;">配音语速<b class="c">:</b></div>
<div class="a" style="left:619.0px;top:319.8px;width:75.9px;height:19.0px;border:1px solid #a3cba6;background:#fdfdfd;box-sizing:border-box"></div>
<div class="t" style="left:622.9px;top:320.8px;font-size:11.7px;color:#111;-webkit-text-stroke:0.14px #111">正常</div>
<div class="a" style="left:681.9px;top:327.1px;width:0;height:0;border-left:4px solid transparent;border-right:4px solid transparent;border-top:4px solid #a9a9a9"></div>
<div class="t" style="left:709.5px;top:321.5px;font-size:11.7px;color:#5a5a5a;">配音语调<b class="c">:</b></div>
<div class="a" style="left:769.3px;top:326.6px;width:152.4px;height:4.0px;background:#7aa97e;border-radius:1px"></div>
<div class="a" style="left:833.8px;top:323.6px;width:7.1px;height:12.3px;background:#6a9e6e"></div>
<div class="t" style="left:955.9px;top:321.5px;font-size:11.7px;color:#2424f0;">恢复默认</div>
<div class="t" style="left:560.7px;top:345.5px;font-size:11.7px;color:#ff2a2a;-webkit-text-stroke:0.2px #ff2a2a">背景模式<b class="c">:</b></div>
<div class="a" style="left:620.0px;top:347.3px;width:13.3px;height:13.3px;border:1.3px solid #cfcfcf;border-radius:50%;background:#fff;box-sizing:border-box"></div>
<div class="t" style="left:634.7px;top:345.5px;font-size:12.9px;color:#8dba9b;">图片背景</div>
<div class="a" style="left:701.0px;top:347.3px;width:14.0px;height:13.3px;border:3.5px solid #7fae84;border-radius:50%;background:#fff;box-sizing:border-box"></div>
<div class="t" style="left:716.7px;top:345.5px;font-size:12.9px;color:#8dba9b;">颜色背景</div>
<div class="t" style="left:778.4px;top:345.5px;font-size:11.7px;color:#5e8a68;">背景颜色<b class="c">:</b></div>
<div class="a" style="left:833.0px;top:346.5px;width:1.3px;height:15.5px;background:#8a8a8a"></div>
<div class="a" style="left:836.8px;top:347.0px;width:70.4px;height:13.8px;background:#008080;border:1.2px solid #222;border-radius:1px;box-sizing:border-box"></div>
<div class="a" style="left:834.3px;top:361.0px;width:74.7px;height:1.0px;background:#e8e8e8"></div>
<div class="a" style="left:909.2px;top:346.5px;width:15.9px;height:15.5px;background:#fff;border-right:2px solid #8a8a8a;border-bottom:2px solid #8a8a8a;box-sizing:border-box"></div>
<div class="a" style="left:913.5px;top:352.6px;width:0;height:0;border-left:3.8px solid transparent;border-right:3.8px solid transparent;border-top:4.2px solid #4d7a62"></div>
<div class="t" style="left:968.7px;top:345.5px;font-size:11.7px;color:#2424f0;">预览效果</div>
<div class="t" style="left:560.7px;top:368.5px;font-size:11.7px;color:#ff2a2a;-webkit-text-stroke:0.2px #ff2a2a">显示效果<b class="c">:</b></div>
<div class="a" style="left:618.2px;top:367.8px;width:152.9px;height:18.8px;border:1px solid #a3cba6;background:#fdfdfd;box-sizing:border-box"></div>
<div class="t" style="left:622.1px;top:368.7px;font-size:11.7px;color:#111;-webkit-text-stroke:0.14px #111">横向-左至右</div>
<div class="a" style="left:758.1px;top:375.0px;width:0;height:0;border-left:4px solid transparent;border-right:4px solid transparent;border-top:4px solid #a9a9a9"></div>
<div class="t" style="left:779.0px;top:368.0px;font-size:11.7px;color:#5a5a5a;">顶部距离<b class="c">:</b></div>
<div class="a" style="left:833.2px;top:366.7px;width:44.4px;height:18.9px;border:1px solid #a3cba6;background:#fff;box-sizing:border-box"></div>
<div class="t" style="left:833.9px;top:367.6px;font-size:11.7px;color:#222;-webkit-text-stroke:0.08px #222">50</div>
<div class="t" style="left:560.7px;top:391.5px;font-size:11.7px;color:#ff2a2a;-webkit-text-stroke:0.2px #ff2a2a">每页最多<b class="c">:</b></div>
<div class="a" style="left:618.2px;top:390.1px;width:44.5px;height:19.3px;border:1px solid #a3cba6;background:#fff;box-sizing:border-box"></div>
<div class="t" style="left:618.9px;top:391.2px;font-size:11.7px;color:#222;-webkit-text-stroke:0.08px #222">6</div>
<div class="t" style="left:664.0px;top:391.5px;font-size:11.7px;color:#666;">单位</div>
<div class="t" style="left:687.9px;top:391.5px;font-size:11.7px;color:#666;"><span>:</span></div>
<div class="t" style="left:693.0px;top:391.5px;font-size:11.7px;color:#666;">行</div>
<div class="t" style="left:711.0px;top:391.5px;font-size:11.7px;color:#666;">请设置字幕文字大小后点预览酌情设置行数</div>
<div class="t" style="left:550.1px;top:417.0px;font-size:11.7px;color:#5a5a5a;"><span style="font-family:Liberation Serif,serif;font-size:12.5px">AI</span>转场特效<b class="c">:</b></div>
<div class="a" style="left:618.2px;top:415.3px;width:161.5px;height:19.3px;border:1px solid #a3cba6;background:#fdfdfd;box-sizing:border-box"></div>
<div class="t" style="left:622.1px;top:416.5px;font-size:11.7px;color:#111;-webkit-text-stroke:0.14px #111">不使用转场</div>
<div class="a" style="left:766.7px;top:422.8px;width:0;height:0;border-left:4px solid transparent;border-right:4px solid transparent;border-top:4px solid #a9a9a9"></div>
<div class="t" style="left:801.3px;top:417.0px;font-size:11.7px;color:#62806a;">转场持续时间<b class="c">:</b></div>
<div class="a" style="left:878.1px;top:415.6px;width:33.5px;height:19.2px;border:1px solid #a3cba6;background:#fff;box-sizing:border-box"></div>
<div class="t" style="left:878.1px;width:33.5px;text-align:center;top:416.7px;font-size:11.7px;color:#222;">1</div>
<div class="t" style="left:914.2px;top:417.0px;font-size:11.7px;color:#666;">秒</div>
<div class="t" style="left:561.1px;top:441.5px;font-size:11.7px;color:#2f7fd6;-webkit-text-stroke:0.2px #2f7fd6">片尾序言<b class="c">:</b></div>
<div class="a" style="left:619.0px;top:440.2px;width:104.3px;height:18.8px;border:1px solid #a3cba6;background:#fdfdfd;box-sizing:border-box"></div>
<div class="t" style="left:622.9px;top:441.1px;font-size:11.7px;color:#111;-webkit-text-stroke:0.14px #111">读取配音</div>
<div class="a" style="left:710.3px;top:447.4px;width:0;height:0;border-left:4px solid transparent;border-right:4px solid transparent;border-top:4px solid #a9a9a9"></div>
<div class="t" style="left:730.0px;top:441.5px;font-size:11.7px;color:#2f7fd6;">识别所提供的音频到字幕进行添加</div>
<div class="t" style="left:561.1px;top:468.9px;font-size:11.7px;color:#2f7fd6;-webkit-text-stroke:0.2px #2f7fd6">配音文件<b class="c">:</b></div>
<div class="a" style="left:619.0px;top:467.4px;width:293.0px;height:19.4px;border:1px solid #a3cba6;background:#fff;box-sizing:border-box"></div>
<div class="a" style="left:910.5px;top:467.4px;width:23.5px;height:19.2px;background:#629c66;border-radius:0 4px 4px 0"></div>
<div class="t" style="left:907.3px;width:30px;text-align:center;top:470.1px;font-size:11px;color:#f4f8ee;font-weight:bold;letter-spacing:-0.5px">...</div>
<div class="a" style="left:621.0px;top:492.7px;width:70.0px;height:19.3px;background:#629c66;border-radius:3px"></div>
<div class="t" style="left:621.0px;width:70px;text-align:center;top:493.9px;font-size:12.9px;color:#f3f5ea;">识别到字幕</div>
<div class="a" style="left:702.1px;top:492.7px;width:69.9px;height:19.3px;background:#629c66;border-radius:3px"></div>
<div class="t" style="left:702.1px;width:69.89999999999998px;text-align:center;top:493.9px;font-size:12.9px;color:#f3f5ea;">编辑字幕</div>
<div class="t" style="left:787.3px;top:494.3px;font-size:11.7px;color:#666;">未识别</div>
<div class="t" style="left:561.1px;top:527.7px;font-size:11.7px;color:#ff2a2a;-webkit-text-stroke:0.2px #ff2a2a">合成模式<b class="c">:</b></div>
<div class="a" style="left:618.2px;top:526.9px;width:152.8px;height:19.0px;border:1px solid #a3cba6;background:#fdfdfd;box-sizing:border-box"></div>
<div class="t" style="left:622.1px;top:527.9px;font-size:11.7px;color:#111;-webkit-text-stroke:0.14px #111">常规合成</div>
<div class="a" style="left:758.0px;top:534.2px;width:0;height:0;border-left:4px solid transparent;border-right:4px solid transparent;border-top:4px solid #a9a9a9"></div>
<div class="t" style="left:561.1px;top:555.8px;font-size:11.7px;color:#222;-webkit-text-stroke:0.05px #222">输出路径<b class="c">:</b></div>
<div class="a" style="left:619.0px;top:554.5px;width:364.0px;height:19.3px;border:1px solid #a3cba6;background:#fff;box-sizing:border-box"></div>
<div class="a" style="left:981.7px;top:554.5px;width:29.7px;height:19.1px;background:#629c66;border-radius:0 4px 4px 0"></div>
<div class="t" style="left:981.6px;width:30px;text-align:center;top:557.1px;font-size:11px;color:#f4f8ee;font-weight:bold;letter-spacing:-0.5px">...</div>
<div class="a" style="left:562.2px;top:587.5px;width:13.6px;height:13.6px;border:1.3px solid #d2d2d2;background:#fff;box-sizing:border-box"></div>
<div class="t" style="left:577.7px;top:584.8px;font-size:12.9px;color:#8dba9b;">全部合成完毕后关机</div>
<div class="a" style="left:562.2px;top:609.4px;width:13.6px;height:13.2px;border:1.3px solid #d2d2d2;background:#fff;box-sizing:border-box"></div>
<div class="t" style="left:577.7px;top:606.5px;font-size:12.9px;color:#8dba9b;">GPU加速(仅支持N卡)</div>
<div class="a" style="left:719.1px;top:584.6px;width:136.2px;height:38.5px;background:#629c66;border-radius:3px"></div>
<div class="t" style="left:793.3px;top:595.5px;font-size:13.1px;color:#f3f5ea;">开始合成</div>
<svg class="a" style="left:748px;top:589px" width="26" height="30" viewBox="0 0 26 30">
<defs><linearGradient id="gp" x1="0" y1="0" x2="1" y2="1"><stop offset="0" stop-color="#f0f0f0"/><stop offset="1" stop-color="#b8b8b8"/></linearGradient></defs>
<path d="M1.5 1.5 L24.5 15 L1.5 28.5 Z" fill="url(#gp)" stroke="#6f6f6f" stroke-width="1.2" stroke-linejoin="round"/></svg>
<div class="a" style="left:875.0px;top:584.0px;width:136.6px;height:39.2px;background:#629c66;border-radius:3px"></div>
<div class="t" style="left:950.0px;top:595.5px;font-size:13.1px;color:#f3f5ea;">停止合成</div>
<svg class="a" style="left:904.5px;top:591.5px" width="25" height="25" viewBox="0 0 25 25">
<defs><linearGradient id="gs" x1="0" y1="0" x2="1" y2="1"><stop offset="0" stop-color="#e8e8e8"/><stop offset="0.5" stop-color="#cfcfcf"/><stop offset="1" stop-color="#e2e2e2"/></linearGradient></defs>
<rect x="1" y="1" width="23" height="23" rx="1.5" fill="url(#gs)" stroke="#6a6a6a" stroke-width="1.3"/></svg>
</body></html>
